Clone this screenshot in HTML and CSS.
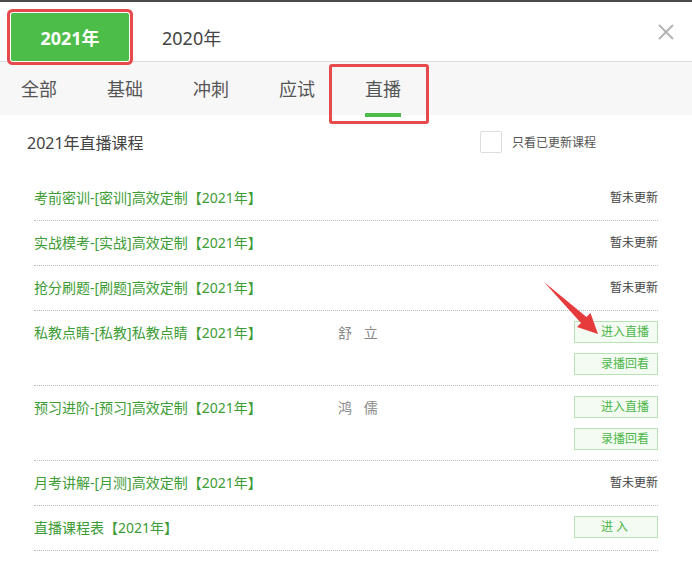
FILE: index.html
```html
<!doctype html>
<html lang="zh-CN">
<head>
    <meta charset="utf-8">
    <title>直播课程</title>
    <link rel="stylesheet" href="styles.css">
</head>
<body>
    <div class="topbar"></div>
    <div class="dialog">
        <div class="year-bar">
            <a class="year-tab active">2021年</a>
            <a class="year-tab">2020年</a>
            <span class="close">
                <svg width="16" height="16" viewBox="0 0 16 16">
                    <path d="M1 1 L15 15 M15 1 L1 15" stroke="#b3b3b3" stroke-width="2" fill="none"/>
                </svg>
            </span>
        </div>

        <div class="cat-bar">
            <a class="cat">全部</a>
            <a class="cat">基础</a>
            <a class="cat">冲刺</a>
            <a class="cat">应试</a>
            <a class="cat active">直播</a>
        </div>

        <div class="section-head">
            <h3 class="section-title">2021年直播课程</h3>
            <label class="only-updated"><span class="check"></span>只看已更新课程</label>
        </div>

        <ul class="course-list">
            <li class="course">
                <a class="course-name">考前密训-[密训]高效定制【2021年】</a>
                <span class="teacher"></span>
                <div class="status"><span class="pending">暂未更新</span></div>
            </li>
            <li class="course">
                <a class="course-name">实战模考-[实战]高效定制【2021年】</a>
                <span class="teacher"></span>
                <div class="status"><span class="pending">暂未更新</span></div>
            </li>
            <li class="course">
                <a class="course-name">抢分刷题-[刷题]高效定制【2021年】</a>
                <span class="teacher"></span>
                <div class="status"><span class="pending">暂未更新</span></div>
            </li>
            <li class="course">
                <a class="course-name">私教点睛-[私教]私教点睛【2021年】</a>
                <span class="teacher">舒 立</span>
                <div class="status">
                    <a class="btn">进入直播</a>
                    <a class="btn">录播回看</a>
                </div>
            </li>
            <li class="course">
                <a class="course-name">预习进阶-[预习]高效定制【2021年】</a>
                <span class="teacher">鸿 儒</span>
                <div class="status">
                    <a class="btn">进入直播</a>
                    <a class="btn">录播回看</a>
                </div>
            </li>
            <li class="course">
                <a class="course-name">月考讲解-[月测]高效定制【2021年】</a>
                <span class="teacher"></span>
                <div class="status"><span class="pending">暂未更新</span></div>
            </li>
            <li class="course">
                <a class="course-name">直播课程表【2021年】</a>
                <span class="teacher"></span>
                <div class="status"><a class="btn">进 入</a></div>
            </li>
        </ul>

        <!-- annotation arrow -->
        <svg class="arrow" width="692" height="577" viewBox="0 0 692 577">
            <polygon points="544,282 586.5,317 590.5,313 598,334 577,327 581,323" fill="#e63b3d"/>
        </svg>
    </div>
</body>
</html>
```

FILE: styles.css
```css
body {
    margin: 0;
    background-color: #ffffff;
    font-family: "Noto Sans", "Noto Sans CJK SC", sans-serif;
    color: #333333;
}

a {
    text-decoration: none;
    cursor: pointer;
}

.topbar {
    height: 2px;
    background-color: #4a4a4a;
}

.dialog {
    position: relative;
    width: 692px;
}

/* year tabs */
.year-bar {
    display: flex;
    align-items: flex-end;
    height: 59px;
    padding-left: 11px;
    padding-right: 18px;
    border-bottom: 1px solid #dddddd;
}

.year-tab {
    height: 48px;
    line-height: 50px;
    font-size: 18px;
    color: #444444;
}

.year-tab.active {
    position: relative;
    z-index: 1;
    width: 118px;
    margin-right: 33px;
    text-align: center;
    font-weight: bold;
    color: #ffffff;
    background-color: #4dbd49;
    border-radius: 2px;
    box-shadow: 0 0 0 1px #ffffff, 0 0 0 4px #e54b4d;
}

.close {
    margin-left: auto;
    align-self: center;
    height: 16px;
    margin-top: -2px;
}

/* category tabs */
.cat-bar {
    display: flex;
    gap: 50px;
    height: 53px;
    padding-left: 21px;
    background-color: #f7f7f7;
}

.cat {
    position: relative;
    line-height: 55px;
    font-size: 18px;
    color: #555555;
}

.cat.active::before {
    content: "";
    position: absolute;
    left: 0;
    right: 0;
    bottom: -2px;
    height: 4px;
    background-color: #4dbd49;
}

.cat.active::after {
    content: "";
    position: absolute;
    top: 2px;
    bottom: -9px;
    left: -36px;
    right: -28px;
    border: 3px solid #e54b4d;
    border-radius: 3px;
}

/* section head */
.section-head {
    display: flex;
    align-items: center;
    height: 54px;
    padding-left: 27px;
    padding-right: 96px;
}

.section-title {
    margin: 0;
    font-size: 16px;
    font-weight: normal;
    color: #444444;
}

.only-updated {
    display: flex;
    align-items: center;
    margin-left: auto;
    font-size: 12px;
    color: #555555;
}

.check {
    width: 20px;
    height: 20px;
    margin-right: 10px;
    border: 1px solid #dddddd;
    border-radius: 2px;
}

/* course list */
.course-list {
    list-style: none;
    margin: 7px 34px 0;
    padding: 0;
}

.course {
    display: flex;
    align-items: flex-start;
    padding: 10px 0;
    line-height: 24px;
    border-bottom: 1px dotted #bbbbbb;
}

.course-name {
    width: 304px;
    font-size: 14px;
    color: #3d9c35;
}

.teacher {
    font-size: 14px;
    color: #888888;
    letter-spacing: 4px;
}

.status {
    display: flex;
    flex-direction: column;
    align-items: flex-end;
    gap: 10px;
    margin-left: auto;
}

.pending {
    font-size: 12px;
    color: #444444;
}

.btn {
    box-sizing: border-box;
    width: 84px;
    height: 22px;
    line-height: 20px;
    padding-left: 26px;
    font-size: 12px;
    color: #4cb648;
    background-color: #f4fbf3;
    border: 1px solid #b8e2b5;
}

.arrow {
    position: absolute;
    top: -2px;
    left: 0;
    pointer-events: none;
}
```
